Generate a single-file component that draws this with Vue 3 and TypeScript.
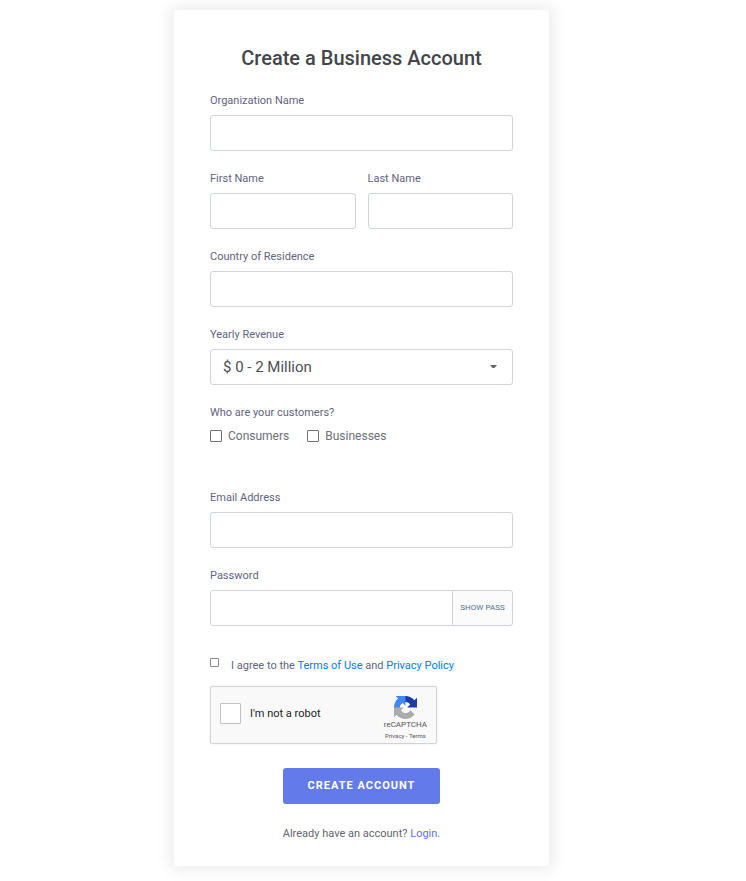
<script setup lang="ts">
import { ref } from 'vue'

const organization = ref<string>('')
const firstName = ref<string>('')
const lastName = ref<string>('')
const country = ref<string>('')
const revenue = ref<string>('$ 0 - 2 Million')
const revenueOptions: string[] = ['$ 0 - 2 Million', '$ 2 - 10 Million', '$ 10 - 50 Million', '$ 50 Million +']
const customerTypes: string[] = ['Consumers', 'Businesses']
const customers = ref<string[]>([])
const email = ref<string>('')
const password = ref<string>('')
const passwordVisible = ref<boolean>(false)
const agreed = ref<boolean>(false)
const human = ref<boolean>(false)
</script>

<template>
  <main class="page">
    <form class="card" @submit.prevent>
      <h1 class="title">Create a Business Account</h1>

      <div class="fields">
        <div class="field">
          <label class="label" for="organization">Organization Name</label>
          <input id="organization" v-model="organization" class="control" type="text" />
        </div>

        <div class="name-row">
          <div class="field">
            <label class="label" for="first-name">First Name</label>
            <input id="first-name" v-model="firstName" class="control" type="text" />
          </div>
          <div class="field">
            <label class="label" for="last-name">Last Name</label>
            <input id="last-name" v-model="lastName" class="control" type="text" />
          </div>
        </div>

        <div class="field">
          <label class="label" for="country">Country of Residence</label>
          <input id="country" v-model="country" class="control" type="text" />
        </div>

        <div class="field">
          <label class="label" for="revenue">Yearly Revenue</label>
          <div class="select-wrap">
            <select id="revenue" v-model="revenue" class="control select">
              <option v-for="option in revenueOptions" :key="option">{{ option }}</option>
            </select>
            <svg class="caret" viewBox="0 0 7 4" aria-hidden="true"><path d="M0 0h7L4.5 3h-2z" /></svg>
          </div>
        </div>

        <fieldset class="customers">
          <legend class="label">Who are your customers?</legend>
          <div class="choices">
            <label v-for="type in customerTypes" :key="type" class="choice">
              <input v-model="customers" class="tick" type="checkbox" :value="type" />
              <span>{{ type }}</span>
            </label>
          </div>
        </fieldset>
      </div>

      <div class="fields credentials">
        <div class="field">
          <label class="label" for="email">Email Address</label>
          <input id="email" v-model="email" class="control" type="email" />
        </div>

        <div class="field">
          <label class="label" for="password">Password</label>
          <div class="password">
            <input
              id="password"
              v-model="password"
              class="control password-input"
              :type="passwordVisible ? 'text' : 'password'"
            />
            <button class="reveal" type="button" @click="passwordVisible = !passwordVisible">
              {{ passwordVisible ? 'HIDE PASS' : 'SHOW PASS' }}
            </button>
          </div>
        </div>
      </div>

      <div class="terms">
        <input id="agree" v-model="agreed" class="tick small" type="checkbox" />
        <label for="agree">
          I agree to the <a href="#terms">Terms of Use</a> and <a href="#privacy">Privacy Policy</a>
        </label>
      </div>

      <div class="captcha">
        <label class="robot">
          <input v-model="human" class="tick large" type="checkbox" />
          <span>I'm not a robot</span>
        </label>
        <div class="brand">
          <svg class="brand-logo" viewBox="0 0 64 64" aria-hidden="true">
            <path fill="#1c3aa9" d="M64 31.955l-.033-1.37V4.687l-7.16 7.16C50.948 4.674 42.033.093 32.05.093c-10.4 0-19.622 4.96-25.458 12.64l11.736 11.86a15.55 15.55 0 0 1 4.754-5.334c2.05-1.6 4.952-2.906 8.968-2.906.485 0 .86.057 1.135.163 4.976.393 9.288 3.14 11.828 7.124l-8.307 8.307L64 31.953" />
            <path fill="#4285f4" d="M31.862.094l-1.37.033H4.594l7.16 7.16C4.58 13.147 0 22.06 0 32.046c0 10.4 4.96 19.622 12.64 25.458L24.5 45.768a15.55 15.55 0 0 1-5.334-4.754c-1.6-2.05-2.906-4.952-2.906-8.968 0-.485.057-.86.163-1.135.393-4.976 3.14-9.288 7.124-11.828l8.307 8.307L31.86.095" />
            <path fill="#ababab" d="M.001 32.045l.033 1.37v25.898l7.16-7.16c5.86 7.173 14.774 11.754 24.76 11.754 10.4 0 19.622-4.96 25.458-12.64l-11.736-11.86a15.55 15.55 0 0 1-4.754 5.334c-2.05 1.6-4.952 2.906-8.968 2.906-.485 0-.86-.057-1.135-.163-4.976-.393-9.288-3.14-11.828-7.124l8.307-8.307c-10.522.04-22.4.066-27.295-.005" />
          </svg>
          <span class="brand-name">reCAPTCHA</span>
          <span class="brand-links"><a href="#captcha-privacy">Privacy</a> - <a href="#captcha-terms">Terms</a></span>
        </div>
      </div>

      <button class="submit" type="submit">CREATE ACCOUNT</button>
      <p class="login">Already have an account? <a href="#login">Login</a>.</p>
    </form>
  </main>
</template>

<style>
body {
  background: #fff;
}
</style>

<style scoped>
* {
  box-sizing: border-box;
}

.page {
  display: flex;
  justify-content: center;
  padding: 10px 23px 15px 0;
  font-family: Roboto, 'Liberation Sans', sans-serif;
  font-size: 11px;
  line-height: 15px;
  color: #5f6480;
}

.card {
  display: flex;
  flex-direction: column;
  width: 100%;
  max-width: 375px;
  padding: 36px 36px 25px;
  border-radius: 3px;
  background: #fff;
  box-shadow: 0 0 16px 4px rgba(0, 0, 0, 0.08);
}

.title {
  margin: 0 0 23px;
  font-size: 20px;
  line-height: 24px;
  font-weight: 500;
  text-align: center;
  color: #43454b;
}

.fields {
  display: flex;
  flex-direction: column;
  gap: 20px;
}

.field {
  display: flex;
  flex-direction: column;
  gap: 7px;
  min-width: 0;
}

.label {
  padding: 0;
  color: #5f6480;
}

.control {
  width: 100%;
  height: 36px;
  margin: 0;
  padding: 0 12px;
  border: 1px solid #ced4da;
  border-radius: 3px;
  background: #fff;
  font: 15px/20px Roboto, 'Liberation Sans', sans-serif;
  color: #495057;
}

.name-row {
  display: grid;
  grid-template-columns: 1fr 1fr;
  gap: 12px;
}

.select-wrap {
  display: grid;
  align-items: center;
}

.select-wrap > * {
  grid-area: 1 / 1;
}

.select {
  appearance: none;
}

.caret {
  justify-self: end;
  width: 7px;
  height: 4px;
  margin-right: 16px;
  fill: #666;
  pointer-events: none;
}

.customers {
  margin: 0;
  padding: 0;
  border: 0;
}

.choices {
  display: flex;
  gap: 18px;
  margin-top: 8px;
}

.choice {
  display: flex;
  align-items: center;
  gap: 6px;
  font-size: 12px;
  line-height: 16px;
  color: #6c6e7c;
}

.tick {
  flex: none;
  appearance: none;
  width: 12px;
  height: 12px;
  margin: 0;
  border: 1px solid #707175;
  border-radius: 1px;
  background: #fff;
}

.tick:checked {
  background: #637bea;
}

.tick.small {
  width: 9px;
  height: 9px;
  border-color: #85868a;
}

.tick.large {
  width: 21px;
  height: 21px;
  border-color: #c1c1c1;
}

.credentials {
  margin-top: 46px;
}

.password {
  display: flex;
}

.password-input {
  flex: 1;
  min-width: 0;
  border-radius: 3px 0 0 3px;
}

.reveal {
  width: 61px;
  margin: 0 0 0 -1px;
  padding: 0;
  border: 1px solid #ced4da;
  border-radius: 0 3px 3px 0;
  background: #fbfbfb;
  font: 8px/12px Roboto, 'Liberation Sans', sans-serif;
  color: #4c7290;
}

.terms {
  display: flex;
  gap: 12px;
  margin-top: 32px;
}

.terms a {
  color: #007bff;
  text-decoration: none;
}

.captcha {
  display: flex;
  justify-content: space-between;
  width: 227px;
  max-width: 100%;
  height: 58px;
  margin-top: 13px;
  padding: 0 9px 3px;
  border: 1px solid #d3d3d3;
  border-radius: 2px;
  background: #f9f9f9;
  box-shadow: 0 0 3px rgba(0, 0, 0, 0.08);
}

.robot {
  display: flex;
  align-items: center;
  gap: 9px;
  color: #222;
}

.brand {
  display: flex;
  flex-direction: column;
  align-items: center;
  padding-top: 9px;
  color: #555;
}

.brand-logo {
  flex: none;
  width: 23px;
  height: 23px;
}

.brand-name {
  font-size: 8px;
  line-height: 12px;
}

.brand-links {
  font-size: 6px;
  line-height: 9px;
}

.brand-links a {
  color: inherit;
  text-decoration: none;
}

.submit {
  align-self: center;
  height: 36px;
  margin-top: 24px;
  padding: 0 25px;
  border: 0;
  border-radius: 3px;
  background: #637bea;
  font: 700 11px/16px Roboto, 'Liberation Sans', sans-serif;
  letter-spacing: 1px;
  color: #fff;
}

.login {
  margin: 22px 0 0;
  text-align: center;
  color: #63656f;
}

.login a {
  color: #5a73e8;
  text-decoration: none;
}
</style>
